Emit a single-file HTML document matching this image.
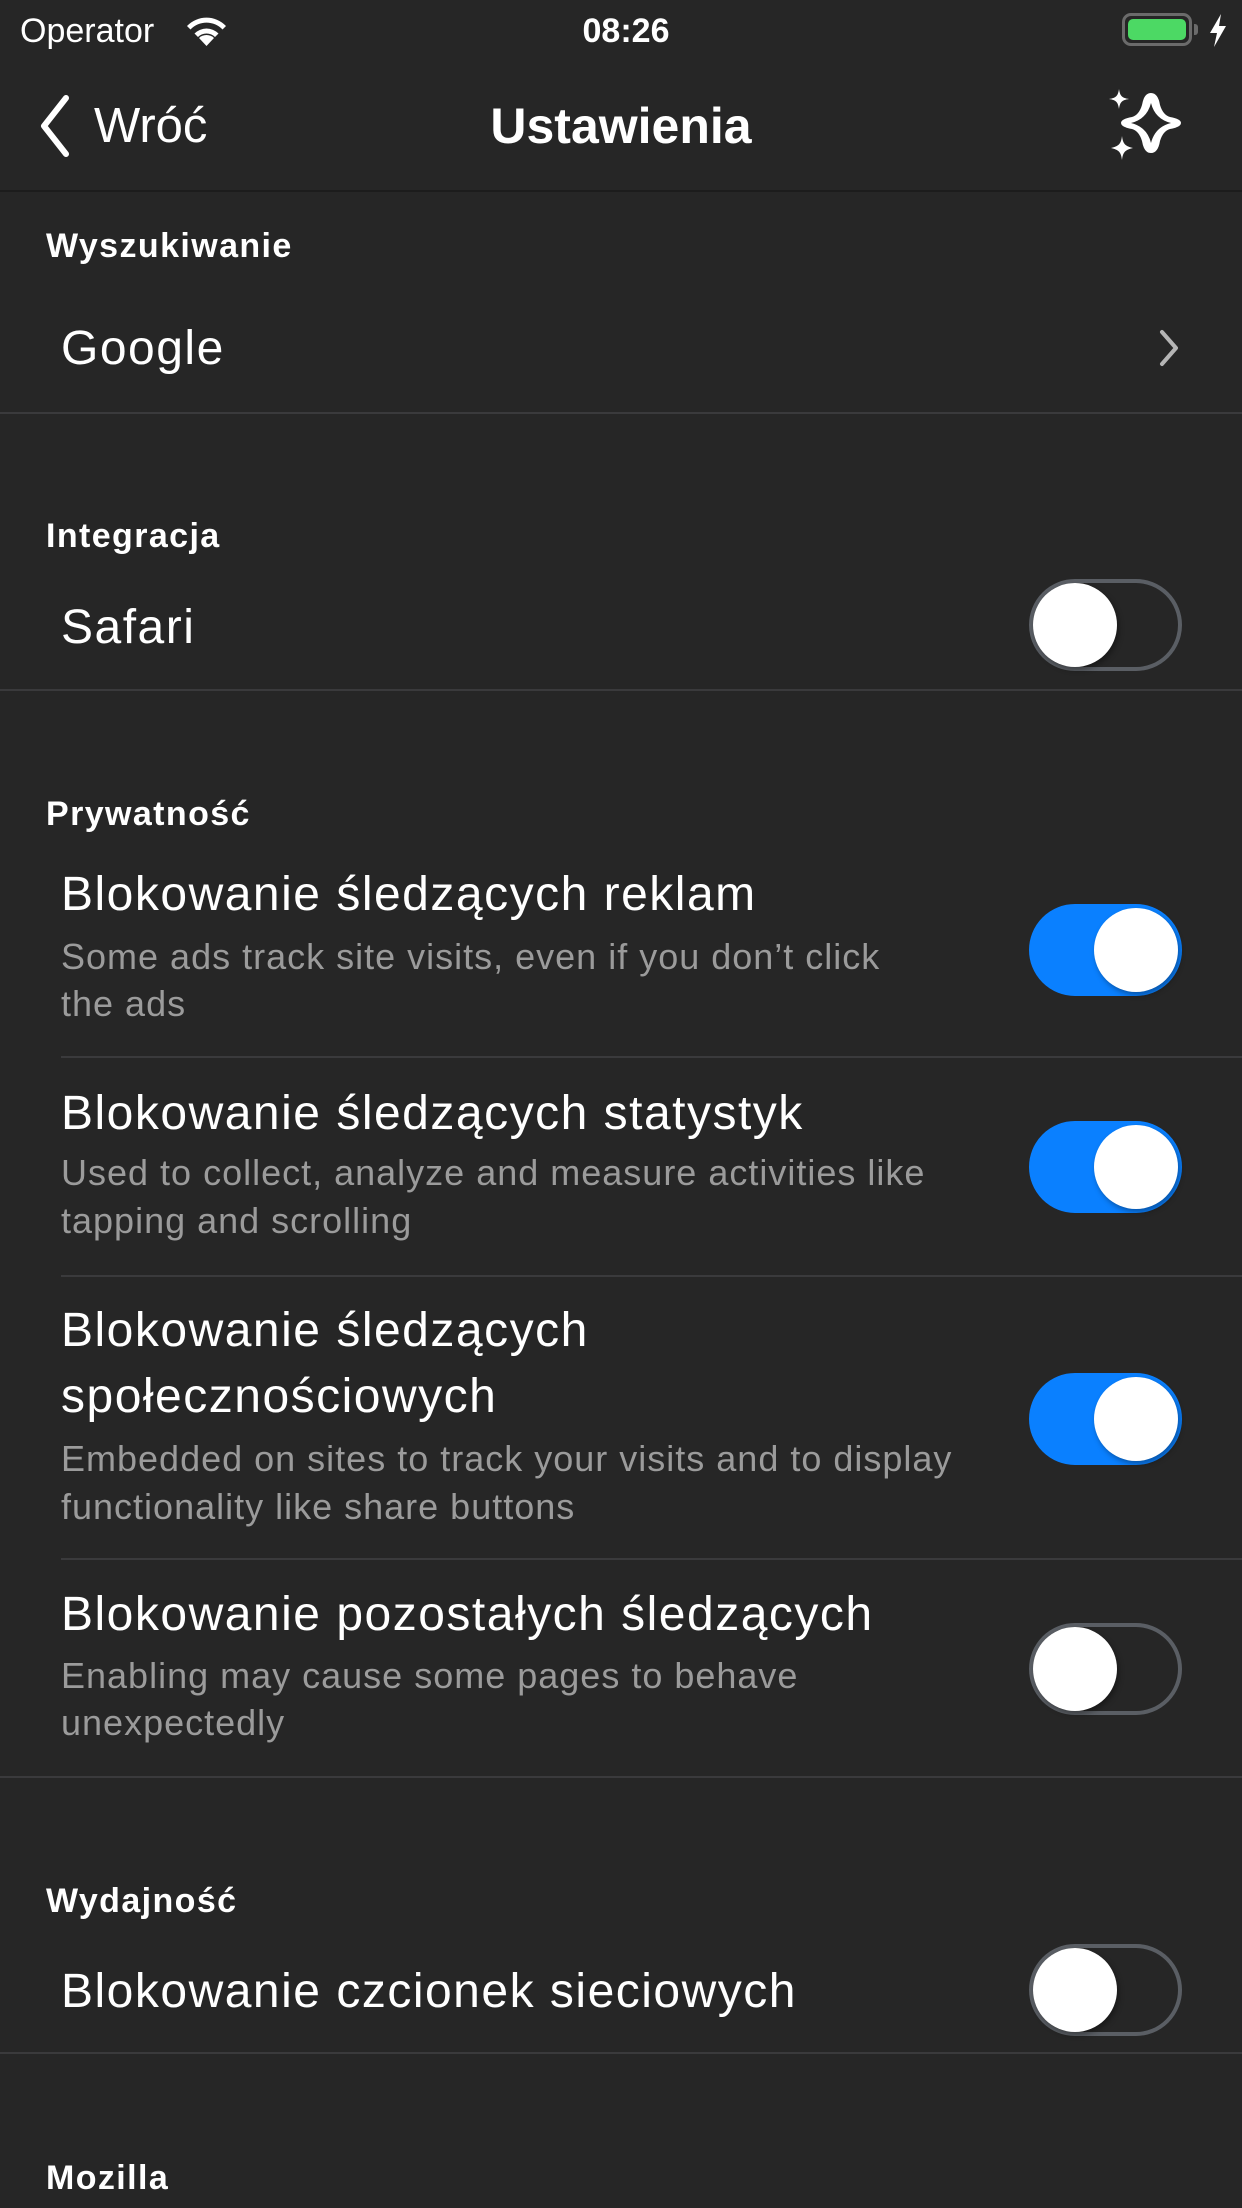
<!DOCTYPE html>
<html><head><meta charset="utf-8">
<style>
*{margin:0;padding:0;box-sizing:border-box}
html,body{width:1242px;height:2208px;background:#262626;overflow:hidden}
body{position:relative;font-family:"Liberation Sans",sans-serif;color:#fff}
.t{position:absolute;white-space:nowrap}
.h{font-weight:bold;font-size:34px;left:46px;letter-spacing:1.4px}
.ti{font-size:48px;left:61px;letter-spacing:1.5px}
.d{font-size:36px;left:61px;color:#9b9b9b;letter-spacing:1px}
.sep{position:absolute;height:2px;background:#3a3a3c;right:0}
.tg{position:absolute;left:1029px;width:153px;height:92px;border-radius:46px;border:4px solid #5a5e64}
.tg .k{position:absolute;left:0px;top:0px;width:84px;height:84px;border-radius:50%;background:#fff;box-shadow:2px 3px 6px rgba(0,0,0,.35)}
.tg.on{background:#0a80ff;border-color:#0a80ff}
.tg.on .k{left:61px}
</style></head><body>
<!-- status bar -->
<div class="t" style="left:20px;top:12px;font-size:34px;line-height:38px">Operator</div>
<svg style="position:absolute;left:184px;top:15px" width="45" height="32" viewBox="0 0 45 32">
<path d="M22.5 31 L15 23 A11 11 0 0 1 30 23 Z" fill="#fff"/>
<path d="M10.5 18.5 A17 17 0 0 1 34.5 18.5 L31 22 A12 12 0 0 0 14 22 Z" fill="#fff"/>
<path d="M3 11 A27 27 0 0 1 42 11 L38.5 14.5 A22 22 0 0 0 6.5 14.5 Z" fill="#fff"/>
</svg>
<div class="t" style="left:0;width:1252px;text-align:center;top:12px;font-size:34px;line-height:38px;font-weight:bold">08:26</div>
<div style="position:absolute;left:1122px;top:13px;width:70px;height:33px;border:3px solid #6b6b6b;border-radius:9px"></div>
<div style="position:absolute;left:1128px;top:19px;width:58px;height:21px;background:#4cd964;border-radius:5px"></div>
<div style="position:absolute;left:1194px;top:24px;width:4px;height:11px;background:#6b6b6b;border-radius:0 3px 3px 0"></div>
<svg style="position:absolute;left:1209px;top:14px" width="18" height="33" viewBox="0 0 18 33"><path d="M12 0 L1 19 L8 19 L5 33 L17 12 L10 12 Z" fill="#fff"/></svg>
<!-- nav -->
<svg style="position:absolute;left:36px;top:94px" width="40" height="64" viewBox="0 0 40 64"><path d="M30 4 L8 32 L30 60" fill="none" stroke="#fff" stroke-width="6" stroke-linecap="round" stroke-linejoin="round"/></svg>
<div class="t" style="left:94px;top:98px;font-size:49px;line-height:56px">Wróć</div>
<div class="t" style="left:0;width:1242px;text-align:center;top:98px;font-size:50px;line-height:56px;font-weight:bold">Ustawienia</div>
<svg style="position:absolute;left:1100px;top:80px" width="90" height="85" viewBox="1100 80 90 85">
<path fill-rule="evenodd" fill="#fff" d="M1151 93 Q1158 93 1160 105 Q1163 115 1170 117 Q1181 119 1181 123 Q1181 127 1170 129 Q1163 131 1160 141 Q1158 153 1151 153 Q1144 153 1142 141 Q1139 131 1132 129 Q1121 127 1121 123 Q1121 119 1132 117 Q1139 115 1142 105 Q1144 93 1151 93 Z
M1151 103 Q1155 119 1171 123 Q1155 127 1151 143 Q1147 127 1131 123 Q1147 119 1151 103 Z"/>
<path d="M1119 89 C1120 96 1122 98 1129 99 C1122 100 1120 102 1119 109 C1118 102 1116 100 1109 99 C1116 98 1118 96 1119 89 Z" fill="#fff"/>
<path d="M1122 136 C1123 144 1125 146 1133 148 C1125 150 1123 152 1122 160 C1121 152 1119 150 1111 148 C1119 146 1121 144 1122 136 Z" fill="#fff"/>
</svg>
<div style="position:absolute;left:0;top:190px;width:1242px;height:2px;background:#1c1c1c"></div>

<div class="t h" style="top:227px;line-height:38px">Wyszukiwanie</div>
<div class="t ti" style="top:321px;line-height:56px">Google</div>
<svg style="position:absolute;left:1157px;top:328px" width="24" height="40" viewBox="0 0 24 40"><path d="M5 4 L19 20 L5 36" fill="none" stroke="#b5b5b5" stroke-width="4" stroke-linecap="round" stroke-linejoin="round"/></svg>
<div class="sep" style="left:0;top:412px"></div>

<div class="t h" style="top:517px;line-height:38px">Integracja</div>
<div class="t ti" style="top:600px;line-height:56px">Safari</div>
<div class="tg" style="top:579px"><div class="k"></div></div>
<div class="sep" style="left:0;top:689px"></div>

<div class="t h" style="top:795px;line-height:38px">Prywatność</div>
<div class="t ti" style="top:867px;line-height:56px">Blokowanie śledzących reklam</div>
<div class="t d" style="top:937px;line-height:40px">Some ads track site visits, even if you don’t click</div>
<div class="t d" style="top:984px;line-height:40px">the ads</div>
<div class="tg on" style="top:904px"><div class="k"></div></div>
<div class="sep" style="left:61px;top:1056px"></div>

<div class="t ti" style="top:1086px;line-height:56px">Blokowanie śledzących statystyk</div>
<div class="t d" style="top:1153px;line-height:40px">Used to collect, analyze and measure activities like</div>
<div class="t d" style="top:1201px;line-height:40px">tapping and scrolling</div>
<div class="tg on" style="top:1121px"><div class="k"></div></div>
<div class="sep" style="left:61px;top:1275px"></div>

<div class="t ti" style="top:1303px;line-height:56px">Blokowanie śledzących</div>
<div class="t ti" style="top:1369px;line-height:56px">społecznościowych</div>
<div class="t d" style="top:1439px;line-height:40px">Embedded on sites to track your visits and to display</div>
<div class="t d" style="top:1487px;line-height:40px">functionality like share buttons</div>
<div class="tg on" style="top:1373px"><div class="k"></div></div>
<div class="sep" style="left:61px;top:1558px"></div>

<div class="t ti" style="top:1587px;line-height:56px">Blokowanie pozostałych śledzących</div>
<div class="t d" style="top:1656px;line-height:40px">Enabling may cause some pages to behave</div>
<div class="t d" style="top:1703px;line-height:40px">unexpectedly</div>
<div class="tg" style="top:1623px"><div class="k"></div></div>
<div class="sep" style="left:0;top:1776px"></div>

<div class="t h" style="top:1882px;line-height:38px">Wydajność</div>
<div class="t ti" style="top:1964px;line-height:56px">Blokowanie czcionek sieciowych</div>
<div class="tg" style="top:1944px"><div class="k"></div></div>
<div class="sep" style="left:0;top:2052px"></div>

<div class="t h" style="top:2159px;line-height:38px">Mozilla</div>
</body></html>
